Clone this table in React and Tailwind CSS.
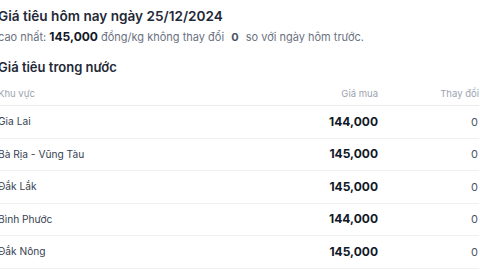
import React from "react";

const rows = [
  { region: "Gia Lai", price: "144,000", change: "0" },
  { region: "Bà Rịa - Vũng Tàu", price: "145,000", change: "0" },
  { region: "Đắk Lắk", price: "145,000", change: "0" },
  { region: "Bình Phước", price: "144,000", change: "0" },
  { region: "Đắk Nông", price: "145,000", change: "0" },
];

export default function App() {
  return (
    <div className="w-[480px] h-[270px] overflow-hidden bg-white font-['Inter',sans-serif]">
      <div className="-ml-[2px] w-[481px] pt-[6px]">
        {/* Tiêu đề */}
        <h1 className="text-[13.6px] leading-[20px] font-semibold text-[#1f2937]">
          Giá tiêu hôm nay ngày 25/12/2024
        </h1>
        <p className="mt-[3px] text-[11px] leading-[16px] text-[#6b7280]">
          cao nhất: <span className="text-[12px] font-bold text-[#111827]">145,000</span> đồng/kg không thay đổi{" "}
          <span className="mx-[4px] font-bold text-[#4b5563]">0</span> so với ngày hôm trước.
        </p>

        {/* Bảng trong nước */}
        <h2 className="mt-[13px] text-[13px] leading-[18px] font-semibold text-[#1f2937]">
          Giá tiêu trong nước
        </h2>
        <div className="mt-[7px]">
          <div className="grid grid-cols-[1fr_110px_100px] h-[23px] items-center border-b border-[#ececec] text-[9.5px] text-[#9ca3af]">
            <div>Khu vực</div>
            <div className="text-right pr-[1px]">Giá mua</div>
            <div className="text-right">Thay đổi</div>
          </div>
          {rows.map((r) => (
            <div
              key={r.region}
              className="grid grid-cols-[1fr_110px_100px] h-[32.5px] items-center border-b border-[#f0f0f0]"
            >
              <div className="text-[10.2px] text-[#374151]">{r.region}</div>
              <div className="text-right pr-[1px] text-[12px] font-bold text-[#111827]">{r.price}</div>
              <div className="text-right pr-[1px] text-[11px] text-[#4b5563]">{r.change}</div>
            </div>
          ))}
        </div>
      </div>
    </div>
  );
}
